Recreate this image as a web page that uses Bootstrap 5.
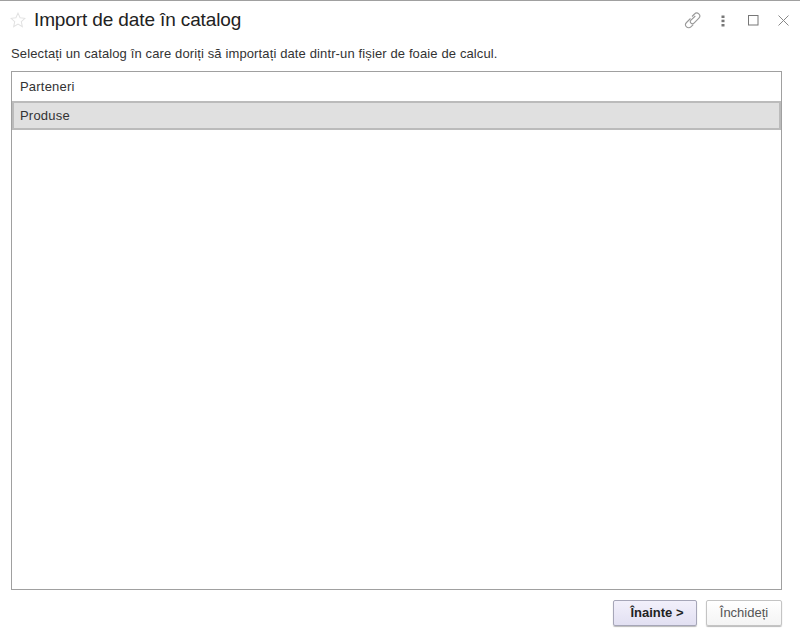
<!DOCTYPE html>
<html lang="ro"><head><meta charset="utf-8"><title>Import</title>
<link href="https://cdn.jsdelivr.net/npm/bootstrap@5.3.0/dist/css/bootstrap.min.css" rel="stylesheet">
<style>
html,body{height:100%}
body{font-family:"Liberation Sans",Arial,sans-serif;font-size:13px;color:#333;background:#fff;overflow:hidden}
.frame{height:636px;border-top:1px solid #a0a0a0;padding:0 2px 0 11px}
.head{height:39px;padding-bottom:2px}
.star{margin-left:-1px;margin-right:8px;margin-top:1px}
.ttl{font-size:19px;letter-spacing:-.12px;line-height:22px;color:#222;margin:0;font-weight:400}
.tools{margin-top:2px}
.tbtn{width:30px;height:20px}
.lnk{margin-left:-2px}
.hint{height:31px;line-height:27px;margin:0;letter-spacing:.125px}
.lst{height:519px;border:1px solid #a0a0a0;width:771px}
.itm{height:29px;line-height:30px;padding-left:8px;font-size:13px;letter-spacing:.2px;color:#333}
.sel{height:29px;line-height:26px;background:#e0e0e0;border:2px solid #bbb;padding-left:6px}
.foot{width:771px;padding-top:10px;gap:9px}
.bt{height:26px;font-size:13px;line-height:24px;border-radius:2px;padding:0;box-shadow:0 1px 1px #bbb}
.pri{width:84px;padding-left:4px;font-weight:700;color:#222;border:1px solid #a6a6b8;background:linear-gradient(#f2f0fb,#e2e0f2)}
.sec{width:76px;color:#555;border:1px solid #c4c4c4;background:linear-gradient(#fff,#f4f4f4)}
</style></head><body>
<div class="frame d-flex flex-column">
<div class="head d-flex align-items-center">
<svg class="star" width="16" height="16" viewBox="0 0 17 17" fill="none" stroke="#e2e2e2" stroke-width="1.1"><path d="M8.500 1.200l2.200 4.900 5.200.6-3.900 3.600 1.100 5.300-4.600-2.700-4.600 2.700 1.100-5.300L1.100 6.700l5.200-.6z"/></svg>
<h1 class="ttl flex-grow-1">Import de date în catalog</h1>
<div class="tools d-flex align-items-center">
<div class="tbtn d-flex justify-content-center align-items-center"><svg class="lnk" width="17" height="17" viewBox="0 0 17 17" fill="none" stroke="#999" stroke-width="1.1"><path d="M8 4.500l2.500-2.500a3 3 0 0 1 4.400 4.200L10 11.200a2.100 2.100 0 0 1-3-3L11.300 4"/><path d="M6.500 6.500L2.500 10.500a3.100 3.100 0 0 0 4.400 4.400l2.300-2.300"/></svg></div>
<div class="tbtn d-flex justify-content-center align-items-center"><svg width="4" height="12" viewBox="0 0 4 12" fill="#777"><rect x=".5" y=".5" width="3" height="2.500"/><rect x=".5" y="4.700" width="3" height="2.500"/><rect x=".5" y="9" width="3" height="2.500"/></svg></div>
<div class="tbtn d-flex justify-content-center align-items-center"><svg width="11" height="11" viewBox="0 0 11 11" fill="none" stroke="#777"><rect x=".5" y=".5" width="9.500" height="9.500"/></svg></div>
<div class="tbtn d-flex justify-content-center align-items-center"><svg width="11" height="11" viewBox="0 0 11 11" fill="none" stroke="#888"><path d="M.5.500l10 10M10.500.500l-10 10"/></svg></div>
</div></div>
<p class="hint">Selectați un catalog în care doriți să importați date dintr-un fișier de foaie de calcul.</p>
<div class="lst">
<div class="itm">Parteneri</div>
<div class="itm sel">Produse</div>
</div>
<div class="foot d-flex justify-content-end">
<button class="btn bt pri" type="button">Înainte &gt;</button>
<button class="btn bt sec" type="button">Închideți</button>
</div>
</div>
<script src="https://cdn.jsdelivr.net/npm/bootstrap@5.3.0/dist/js/bootstrap.bundle.min.js"></script>
</body></html>
